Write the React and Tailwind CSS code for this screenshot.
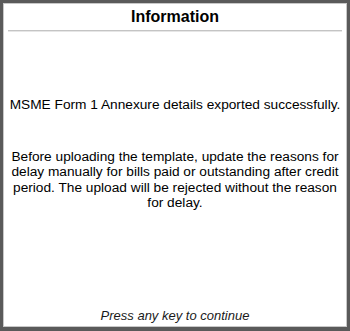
export default function App() {
  return (
    <div className="w-[350px] h-[331px] bg-[#5a5a5a] p-[3px] pb-[4px]" style={{ fontFamily: '"Liberation Sans", Arial, sans-serif' }}>
      <div className="w-full h-full bg-white border border-[#c8c8c8] flex flex-col">
        <div className="text-center font-bold text-[16px] leading-[20px] pt-[3px] pb-[3px] text-black">Information</div>
        <div className="mx-[4px] h-[2px] bg-[#c4c4c4] border-b border-[#e6e6e6]"></div>
        <div className="flex-1 flex flex-col items-center text-black text-[13.7px] leading-[15.5px] text-center px-[3px]">
          <p className="mt-[65px]">MSME Form 1 Annexure details exported successfully.</p>
          <p className="mt-[36px]">Before uploading the template, update the reasons for delay manually for bills paid or outstanding after credit period. The upload will be rejected without the reason for delay.</p>
          <p className="mt-auto mb-[2px] italic text-[13px] leading-[16px] text-[#1a1a1a]">Press any key to continue</p>
        </div>
      </div>
    </div>
  );
}
